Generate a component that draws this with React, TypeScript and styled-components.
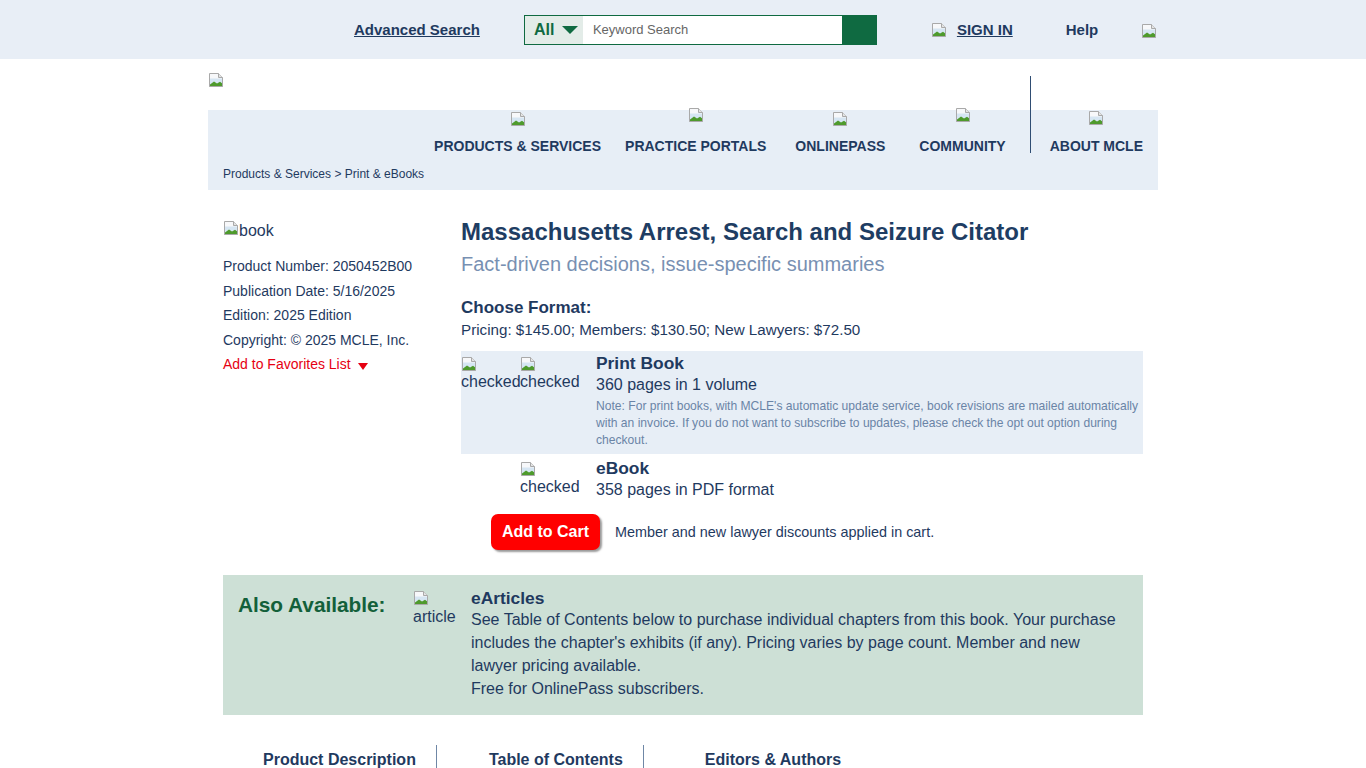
import React from 'react';
import styled, { createGlobalStyle } from 'styled-components';

const navy = '#1f3a5f';
const green = '#0f6a41';

const GlobalStyle = createGlobalStyle`
  html, body { margin: 0; padding: 0; background: #fff; }
  body { font-family: "Liberation Sans", Arial, sans-serif; color: ${navy}; }
  * { box-sizing: border-box; }
`;

const BrokenIcon: React.FC = () => (
  <svg width={16} height={16} viewBox="0 0 16 16" style={{ display: 'block', flex: 'none' }}>
    <path d="M1.5 1.5H10.5L14.5 5.5V14.5H1.5Z" fill="#f7f8fa" stroke="#a9a9a9" />
    <path d="M10.5 1.5V5.5H14.5" fill="#e4e4e4" stroke="#a9a9a9" />
    <path d="M2 6.5H14V14H2Z" fill="#d6e6f3" />
    <path d="M2 14V12.5L6 9.5L9 11.5L12 9.8L14 11.2V14Z" fill="#4e9a2c" />
    <path d="M1.5 14.5H14.5" stroke="#a9a9a9" />
  </svg>
);

/* ---------- Top bar ---------- */
const TopBar = styled.div`
  background: #e8eef6;
  height: 59px;
`;
const TopInner = styled.div`
  width: 950px;
  margin: 0 auto;
  height: 100%;
  display: flex;
  align-items: center;
`;
const TopLink = styled.a<{ $ml: number }>`
  margin-left: ${p => p.$ml}px;
  font-size: 15px;
  font-weight: bold;
  color: ${navy};
  text-decoration: underline;
  white-space: nowrap;
  cursor: pointer;
`;
const TopPlain = styled.span<{ $ml: number }>`
  margin-left: ${p => p.$ml}px;
  font-size: 15px;
  font-weight: bold;
  color: ${navy};
  white-space: nowrap;
`;
const IconSlot = styled.span<{ $ml: number; $dy?: number }>`
  margin-left: ${p => p.$ml}px;
  margin-top: ${p => p.$dy ?? 0}px;
  display: inline-flex;
  flex: none;
`;
const SearchBox = styled.div`
  margin-left: 44px;
  width: 353px;
  height: 30px;
  border: 1px solid ${green};
  display: flex;
  background: #fff;
  flex: none;
`;
const ScopeSelect = styled.div`
  width: 58px;
  background: #e3ece8;
  display: flex;
  align-items: center;
  padding-left: 9px;
  font-size: 16px;
  font-weight: bold;
  color: ${green};
`;
const Caret = styled.span`
  margin-left: 8px;
  width: 0;
  height: 0;
  border-left: 8px solid transparent;
  border-right: 8px solid transparent;
  border-top: 8px solid ${green};
`;
const SearchInput = styled.input`
  flex: 1;
  min-width: 0;
  border: none;
  outline: none;
  padding: 0 10px;
  font-family: "Liberation Sans", Arial, sans-serif;
  font-size: 13px;
  color: #333;
  &::placeholder { color: #666; }
`;
const SearchButton = styled.button`
  width: 34px;
  flex: none;
  border: none;
  background: ${green};
`;

/* ---------- Header ---------- */
const Header = styled.div`
  width: 950px;
  margin: 0 auto;
  background: linear-gradient(to bottom, #fff 0, #fff 51px, #e7eef6 51px);
`;
const HeaderRow = styled.div`
  display: flex;
  justify-content: space-between;
  align-items: flex-start;
  padding-top: 13px;
`;
const Nav = styled.nav`
  display: flex;
  align-items: flex-start;
  margin-top: 4px;
  padding-right: 15px;
`;
const NavItem = styled.a<{ $ml: number; $dy: number }>`
  margin-left: ${p => p.$ml}px;
  display: flex;
  flex-direction: column;
  align-items: center;
  padding-top: ${p => 34 + p.$dy}px;
  font-size: 14px;
  font-weight: bold;
  color: ${navy};
  white-space: nowrap;
  cursor: pointer;
`;
const NavLabel = styled.span<{ $dy: number }>`
  margin-top: ${p => 12 - p.$dy}px;
  line-height: 16px;
`;
const NavDivider = styled.span`
  margin-left: 24px;
  width: 1px;
  height: 77px;
  background: #2f4d73;
`;
const Breadcrumb = styled.div`
  padding: 13px 15px 9px;
  font-size: 12px;
  line-height: 14px;
  color: ${navy};
`;

/* ---------- Main ---------- */
const Main = styled.main`
  width: 950px;
  margin: 0 auto;
  padding: 28px 15px 0;
`;
const Columns = styled.div`
  display: grid;
  grid-template-columns: 238px 1fr;
`;
const Side = styled.aside`
  padding-top: 2px;
`;
const BookImg = styled.div`
  display: flex;
  align-items: flex-start;
  font-size: 16px;
  line-height: 20px;
  color: ${navy};
  margin-bottom: 13px;
  span { margin-top: 1px; }
`;
const InfoLine = styled.div`
  font-size: 14px;
  line-height: 24.5px;
  color: ${navy};
`;
const FavLink = styled.a`
  display: inline-flex;
  align-items: center;
  font-size: 14px;
  line-height: 24.5px;
  color: #e60012;
  cursor: pointer;
`;
const FavCaret = styled.span`
  margin-left: 7px;
  margin-top: 4px;
  width: 0;
  height: 0;
  border-left: 5px solid transparent;
  border-right: 5px solid transparent;
  border-top: 7px solid #e60012;
`;
const Detail = styled.section``;
const Title = styled.h1`
  margin: 0;
  font-size: 24px;
  line-height: 28px;
  font-weight: bold;
  color: #1e3d63;
`;
const Subtitle = styled.h2`
  margin: 6px 0 0;
  font-size: 20px;
  line-height: 24px;
  font-weight: normal;
  color: #7890b2;
`;
const ChooseHead = styled.h3`
  margin: 22px 0 0;
  font-size: 17px;
  line-height: 20px;
  font-weight: bold;
  color: ${navy};
`;
const Pricing = styled.div`
  margin-top: 3px;
  font-size: 15.2px;
  line-height: 18px;
  color: ${navy};
`;
const FormatRow = styled.div<{ $shaded?: boolean }>`
  display: grid;
  grid-template-columns: 135px 1fr;
  background: ${p => (p.$shaded ? '#e7eef6' : 'transparent')};
  padding: 3px 4px ${p => (p.$shaded ? 5 : 0)}px 0;
  margin-top: ${p => (p.$shaded ? 12 : 2)}px;
`;
const Checks = styled.div`
  display: flex;
  align-items: flex-start;
  padding-top: 2px;
`;
const AltImg = styled.div<{ $w: number; $hidden?: boolean }>`
  width: ${p => p.$w}px;
  font-size: 16px;
  line-height: 20px;
  color: ${navy};
  visibility: ${p => (p.$hidden ? 'hidden' : 'visible')};
`;
const FormatName = styled.div`
  margin-top: -1px;
  font-size: 17.4px;
  line-height: 20px;
  font-weight: bold;
  color: ${navy};
`;
const FormatDesc = styled.div`
  margin-top: 2px;
  font-size: 16px;
  line-height: 20px;
  color: ${navy};
`;
const Note = styled.div`
  margin-top: 3px;
  font-size: 12.1px;
  line-height: 17px;
  color: #6a84a6;
`;
const CartRow = styled.div`
  display: flex;
  align-items: center;
  margin-top: 14px;
  padding-left: 30px;
`;
const CartButton = styled.button`
  width: 109px;
  height: 36px;
  border: none;
  border-radius: 7px;
  background: #ff0000;
  color: #fff;
  font-family: "Liberation Sans", Arial, sans-serif;
  font-size: 16px;
  font-weight: bold;
  box-shadow: 2px 2px 2px #9a9a9a;
  cursor: pointer;
`;
const CartNote = styled.span`
  margin-left: 15px;
  font-size: 14.4px;
  color: ${navy};
`;

const AlsoBox = styled.section`
  margin-top: 25px;
  background: #cde0d6;
  display: grid;
  grid-template-columns: 175px 58px 1fr;
  padding: 13px 15px 15px;
`;
const AlsoLabel = styled.div`
  padding-top: 5px;
  font-size: 20.8px;
  line-height: 23px;
  font-weight: bold;
  color: #13603a;
`;
const AlsoImg = styled.div`
  padding-top: 2px;
  font-size: 16px;
  line-height: 22px;
  color: ${navy};
`;
const AlsoName = styled.div`
  font-size: 17.4px;
  line-height: 20px;
  font-weight: bold;
  color: ${navy};
`;
const AlsoText = styled.p`
  margin: 0;
  font-size: 16px;
  line-height: 23px;
  color: ${navy};
`;

const Tabs = styled.div`
  display: flex;
  align-items: center;
  margin-top: 30px;
  padding-left: 40px;
`;
const Tab = styled.a`
  font-size: 16px;
  font-weight: bold;
  color: ${navy};
  white-space: nowrap;
  cursor: pointer;
`;
const TabDivider = styled.span<{ $mr: number }>`
  width: 1px;
  height: 30px;
  background: #6f87a6;
  margin: 0 ${p => p.$mr}px 0 20px;
`;

const navItems = [
  { label: 'PRODUCTS & SERVICES', ml: 0, dy: 1 },
  { label: 'PRACTICE PORTALS', ml: 24, dy: -3 },
  { label: 'ONLINEPASS', ml: 29, dy: 1 },
  { label: 'COMMUNITY', ml: 34, dy: -3 },
];

export default function App() {
  return (
    <>
      <GlobalStyle />
      <TopBar>
        <TopInner>
          <TopLink $ml={146}>Advanced Search</TopLink>
          <SearchBox>
            <ScopeSelect>
              All<Caret />
            </ScopeSelect>
            <SearchInput placeholder="Keyword Search" />
            <SearchButton aria-label="Search" />
          </SearchBox>
          <IconSlot $ml={54}>
            <BrokenIcon />
          </IconSlot>
          <TopLink $ml={10}>SIGN IN</TopLink>
          <TopPlain $ml={53}>Help</TopPlain>
          <IconSlot $ml={43} $dy={2}>
            <BrokenIcon />
          </IconSlot>
        </TopInner>
      </TopBar>

      <Header>
        <HeaderRow>
          <BrokenIcon />
          <Nav>
            {navItems.map(n => (
              <NavItem key={n.label} $ml={n.ml} $dy={n.dy}>
                <BrokenIcon />
                <NavLabel $dy={n.dy}>{n.label}</NavLabel>
              </NavItem>
            ))}
            <NavDivider />
            <NavItem $ml={19} $dy={0}>
              <BrokenIcon />
              <NavLabel $dy={0}>ABOUT MCLE</NavLabel>
            </NavItem>
          </Nav>
        </HeaderRow>
        <Breadcrumb>Products &amp; Services &gt; Print &amp; eBooks</Breadcrumb>
      </Header>

      <Main>
        <Columns>
          <Side>
            <BookImg>
              <BrokenIcon />
              <span>book</span>
            </BookImg>
            <InfoLine>Product Number: 2050452B00</InfoLine>
            <InfoLine>Publication Date: 5/16/2025</InfoLine>
            <InfoLine>Edition: 2025 Edition</InfoLine>
            <InfoLine>Copyright: © 2025 MCLE, Inc.</InfoLine>
            <FavLink>
              Add to Favorites List
              <FavCaret />
            </FavLink>
          </Side>

          <Detail>
            <Title>Massachusetts Arrest, Search and Seizure Citator</Title>
            <Subtitle>Fact-driven decisions, issue-specific summaries</Subtitle>
            <ChooseHead>Choose Format:</ChooseHead>
            <Pricing>Pricing: $145.00; Members: $130.50; New Lawyers: $72.50</Pricing>

            <FormatRow $shaded>
              <Checks>
                <AltImg $w={59}>
                  <BrokenIcon />
                  checked
                </AltImg>
                <AltImg $w={60}>
                  <BrokenIcon />
                  checked
                </AltImg>
              </Checks>
              <div>
                <FormatName>Print Book</FormatName>
                <FormatDesc>360 pages in 1 volume</FormatDesc>
                <Note>
                  Note: For print books, with MCLE's automatic update service, book revisions are mailed
                  automatically with an invoice. If you do not want to subscribe to updates, please check the
                  opt out option during checkout.
                </Note>
              </div>
            </FormatRow>

            <FormatRow>
              <Checks>
                <AltImg $w={59} $hidden />
                <AltImg $w={60}>
                  <BrokenIcon />
                  checked
                </AltImg>
              </Checks>
              <div>
                <FormatName>eBook</FormatName>
                <FormatDesc>358 pages in PDF format</FormatDesc>
              </div>
            </FormatRow>

            <CartRow>
              <CartButton>Add to Cart</CartButton>
              <CartNote>Member and new lawyer discounts applied in cart.</CartNote>
            </CartRow>
          </Detail>
        </Columns>

        <AlsoBox>
          <AlsoLabel>Also Available:</AlsoLabel>
          <AlsoImg>
            <BrokenIcon />
            article
          </AlsoImg>
          <div>
            <AlsoName>eArticles</AlsoName>
            <AlsoText>
              See Table of Contents below to purchase individual chapters from this book. Your purchase
              includes the chapter's exhibits (if any). Pricing varies by page count. Member and new lawyer
              pricing available.
              <br />
              Free for OnlinePass subscribers.
            </AlsoText>
          </div>
        </AlsoBox>

        <Tabs>
          <Tab>Product Description</Tab>
          <TabDivider $mr={52} />
          <Tab>Table of Contents</Tab>
          <TabDivider $mr={61} />
          <Tab>Editors &amp; Authors</Tab>
        </Tabs>
      </Main>
    </>
  );
}
